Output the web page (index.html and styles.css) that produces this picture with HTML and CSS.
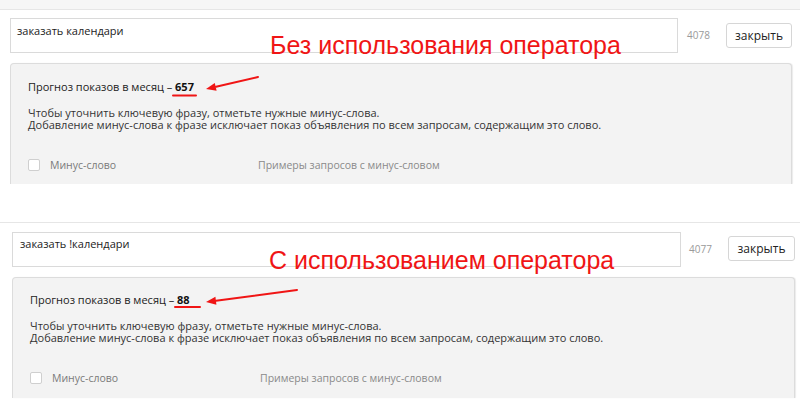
FILE: index.html
```html
<!DOCTYPE html>
<html lang="ru">
<head>
    <meta charset="UTF-8">
    <title>Минус-слова — сравнение</title>
    <link rel="stylesheet" href="styles.css">
</head>
<body>
    <!-- без оператора -->
    <div class="shot shot-first">
        <div class="topbar"></div>
        <div class="phrase-row">
            <div class="phrase-input">заказать календари</div>
            <span class="counter">4078</span>
            <button class="close-btn">закрыть</button>
        </div>
        <div class="panel">
            <p class="forecast">Прогноз показов в месяц – <b>657</b></p>
            <p class="hint">Чтобы уточнить ключевую фразу, отметьте нужные минус-слова.<br>Добавление минус-слова к фразе исключает показ объявления по всем запросам, содержащим это слово.</p>
            <div class="minus-row">
                <label class="minus-check"><span class="box"></span>Минус-слово</label>
                <span class="examples">Примеры запросов с минус-словом</span>
            </div>
        </div>
        <div class="note">Без использования оператора</div>
        <svg class="marks" width="800" height="184">
            <line x1="258" y1="77" x2="216" y2="86.8" />
            <polygon points="206,89 216.6,90.7 214.8,82.9" />
            <line class="under" x1="173" y1="95.5" x2="196" y2="95.5" />
        </svg>
    </div>

    <!-- с оператором -->
    <div class="shot shot-second">
        <div class="topbar"></div>
        <div class="phrase-row">
            <div class="phrase-input">заказать !календари</div>
            <span class="counter">4077</span>
            <button class="close-btn">закрыть</button>
        </div>
        <div class="panel">
            <p class="forecast">Прогноз показов в месяц – <b>88</b></p>
            <p class="hint">Чтобы уточнить ключевую фразу, отметьте нужные минус-слова.<br>Добавление минус-слова к фразе исключает показ объявления по всем запросам, содержащим это слово.</p>
            <div class="minus-row">
                <label class="minus-check"><span class="box"></span>Минус-слово</label>
                <span class="examples">Примеры запросов с минус-словом</span>
            </div>
        </div>
        <div class="note">С использованием оператора</div>
        <svg class="marks" width="800" height="234">
            <line x1="297" y1="106" x2="216" y2="116.7" />
            <polygon points="206,118 216.4,120.7 215.4,112.7" />
            <line class="under" x1="175" y1="123" x2="200" y2="123" />
        </svg>
    </div>
</body>
</html>
```

FILE: styles.css
```css
:root {
    --mark-color: #f01515;
    --panel-bg: #f3f3f3;
    --line-color: #e6e6e6;
}

* {
    margin: 0;
    padding: 0;
    box-sizing: border-box;
}

body {
    width: 800px;
    height: 418px;
    overflow: hidden;
    background: white;
    font-family: 'Open Sans', 'Liberation Sans', sans-serif;
    font-size: 11px;
    color: #333;
}

.shot {
    position: relative;
    padding-left: 10px;
}

.shot-first {
    height: 184px;
}

.shot-second {
    height: 234px;
    padding-left: 12px;
}

.topbar {
    height: 10px;
    background: #f6f6f6;
    border-bottom: 1px solid var(--line-color);
    margin-left: -10px;
}

.shot-second .topbar {
    height: 39px;
    background: white;
    margin-left: -12px;
}

.phrase-row {
    display: flex;
    align-items: flex-start;
    margin-top: 8px;
}

.shot-second .phrase-row {
    margin-top: 9px;
}

.phrase-input {
    width: 668px;
    height: 35px;
    border: 1px solid #dadada;
    padding: 5px 6px 0;
    line-height: 14px;
    color: #222;
    background: white;
}

.shot-second .phrase-input {
    width: 669px;
    padding: 4px 7px 0;
}

.counter {
    width: 48px;
    padding-left: 9px;
    margin-top: 10px;
    font-size: 10px;
    line-height: 14px;
    color: #9a9a9a;
}

.shot-second .counter {
    width: 47px;
    padding-left: 8px;
}

.close-btn {
    width: 66px;
    height: 25px;
    margin-top: 5px;
    border: 1px solid #d6d6d6;
    border-radius: 3px;
    background: white;
    font-family: inherit;
    font-size: 12px;
    color: #222;
}

.shot-second .close-btn {
    width: 67px;
    margin-top: 4px;
}

.panel {
    width: 782px;
    height: 121px;
    margin-top: 10px;
    padding: 15px 0 0 17px;
    background: var(--panel-bg);
    border: 1px solid #dcdcdc;
    border-bottom: none;
    border-radius: 4px 4px 0 0;
    box-shadow: 1px 0 1px rgba(0,0,0,0.08);
    overflow: hidden;
}

.shot-second .panel {
    width: 783px;
    padding-top: 14px;
}

.forecast {
    line-height: 16px;
    color: #222;
}

.forecast b {
    font-weight: 700;
    color: #111;
}

.hint {
    margin-top: 12px;
    line-height: 12px;
    color: #333;
}

.minus-row {
    display: flex;
    align-items: center;
    margin-top: 26px;
    font-size: 10.5px;
    line-height: 16px;
    color: #7a7a7a;
}

.minus-check {
    display: flex;
    align-items: center;
    width: 230px;
}

.box {
    width: 12px;
    height: 12px;
    margin-right: 10px;
    background: white;
    border: 1px solid #cfcfcf;
    border-radius: 2px;
}

.examples {
    color: #8a8a8a;
}

.note {
    position: absolute;
    left: 270px;
    top: 33px;
    font-family: 'Liberation Sans', Arial, sans-serif;
    font-size: 25px;
    line-height: 25px;
    color: var(--mark-color);
    white-space: nowrap;
}

.shot-second .note {
    left: 269px;
    top: 64px;
}

.marks {
    position: absolute;
    left: 0;
    top: 0;
    pointer-events: none;
}

.marks line {
    stroke: var(--mark-color);
    stroke-width: 2;
    stroke-linecap: round;
}

.marks polygon {
    fill: var(--mark-color);
}
```
